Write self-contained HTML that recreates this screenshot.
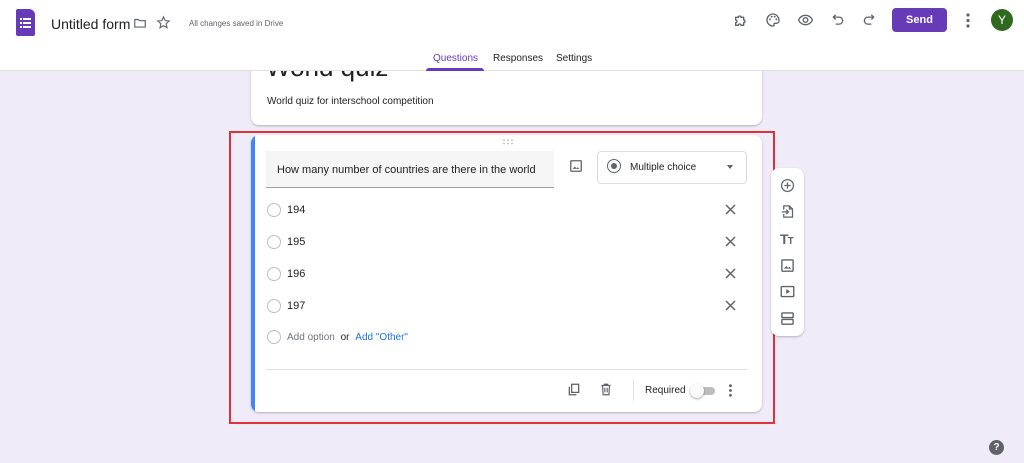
<!DOCTYPE html>
<html><head><meta charset="utf-8"><style>
*{box-sizing:border-box;margin:0;padding:0}
body{width:1024px;height:463px;overflow:hidden;background:#f0ebf8;font-family:"Liberation Sans",Arial,sans-serif;position:relative;color:#202124}
.abs{position:absolute}
#hdr{left:0;top:0;width:1024px;height:71px;background:#fff;border-bottom:1px solid #e0e0e0;z-index:5}
.card{background:#fff;border-radius:8px;box-shadow:0 1px 2px rgba(0,0,0,.25)}
.radio{width:14px;height:14px;border:1.5px solid #bdbdbd;border-radius:50%}
.opt{font-size:11px;color:#202124}
svg{display:block}
</style></head><body>
<div id="hdr" class="abs">
  <div class="abs" style="left:16px;top:9px;width:19px;height:27px;background:#673ab7;border-radius:2px 6px 2px 2px"></div>
  <svg class="abs" style="left:19px;top:17px" width="13" height="12" viewBox="0 0 13 12"><g fill="#fff"><rect x="1" y="1" width="2" height="2"/><rect x="4" y="1" width="8" height="2"/><rect x="1" y="5" width="2" height="2"/><rect x="4" y="5" width="8" height="2"/><rect x="1" y="9" width="2" height="2"/><rect x="4" y="9" width="8" height="2"/></g></svg>
  <div class="abs" style="left:51px;top:16px;font-size:14px;color:#202124">Untitled form</div>
  <svg class="abs" style="left:133px;top:16px" width="14" height="14" viewBox="0 0 24 24"><path d="M3 6h6l2 2h10v11H3z" fill="none" stroke="#5f6368" stroke-width="2"/></svg>
  <svg class="abs" style="left:156px;top:15px" width="15" height="15" viewBox="0 0 24 24"><path d="M12 3l2.7 6 6.3.6-4.8 4.3 1.4 6.4L12 17l-5.6 3.3 1.4-6.4L3 9.6 9.3 9z" fill="none" stroke="#5f6368" stroke-width="1.8"/></svg>
  <div class="abs" style="left:189px;top:19px;font-size:8px;color:#5f6368">All changes saved in Drive</div>
  <svg class="abs" style="left:733px;top:12px" width="16" height="16" viewBox="0 0 24 24"><path d="M4 8h4a2 2 0 1 1 4 0h4v4a2 2 0 1 1 0 4v4h-4a2 2 0 1 0-4 0H4v-4a2 2 0 1 0 0-4z" fill="none" stroke="#5f6368" stroke-width="2"/></svg>
  <svg class="abs" style="left:765px;top:12px" width="16" height="16" viewBox="0 0 24 24"><path d="M12 3a9 9 0 0 0 0 18c1.5 0 2-1 1.5-2s0-2 1.5-2H17a4 4 0 0 0 4-4c0-5.5-4-10-9-10z" fill="none" stroke="#5f6368" stroke-width="2"/><circle cx="7.5" cy="11" r="1.4" fill="#5f6368"/><circle cx="10" cy="7" r="1.4" fill="#5f6368"/><circle cx="14.5" cy="7" r="1.4" fill="#5f6368"/><circle cx="17" cy="11" r="1.4" fill="#5f6368"/></svg>
  <svg class="abs" style="left:797px;top:12px" width="17" height="16" viewBox="0 0 24 24"><path d="M1.5 12C4 7 8 5 12 5s8 2 10.5 7c-2.5 5-6.5 7-10.5 7s-8-2-10.5-7z" fill="none" stroke="#5f6368" stroke-width="2"/><circle cx="12" cy="12" r="3.5" fill="none" stroke="#5f6368" stroke-width="2"/></svg>
  <svg class="abs" style="left:831px;top:12px" width="14" height="15" viewBox="0 0 24 24"><path d="M8 4L4 8l4 4M4 8h10a6 6 0 0 1 0 12H8" fill="none" stroke="#5f6368" stroke-width="2.2"/></svg>
  <svg class="abs" style="left:862px;top:12px" width="14" height="15" viewBox="0 0 24 24"><path d="M16 4l4 4-4 4M20 8H10a6 6 0 0 0 0 12h6" fill="none" stroke="#5f6368" stroke-width="2.2"/></svg>
  <div class="abs" style="left:892px;top:8px;width:55px;height:24px;background:#673ab7;border-radius:4px;color:#fff;font-size:11px;font-weight:bold;text-align:center;line-height:24px">Send</div>
  <svg class="abs" style="left:965px;top:13px" width="6" height="15" viewBox="0 0 6 15"><circle cx="3" cy="2" r="1.6" fill="#5f6368"/><circle cx="3" cy="7.5" r="1.6" fill="#5f6368"/><circle cx="3" cy="13" r="1.6" fill="#5f6368"/></svg>
  <div class="abs" style="left:991px;top:9px;width:22px;height:22px;border-radius:50%;background:#2e6a1e;color:#fff;font-size:12px;text-align:center;line-height:22px">Y</div>
  <div class="abs" style="left:433px;top:53px;font-size:10px;color:#673ab7">Questions</div>
  <div class="abs" style="left:426px;top:68px;width:58px;height:3px;background:#673ab7;border-radius:3px 3px 0 0"></div>
  <div class="abs" style="left:493px;top:53px;font-size:10px;color:#202124">Responses</div>
  <div class="abs" style="left:556px;top:53px;font-size:10px;color:#202124">Settings</div>
</div>

<div class="abs card" style="left:251px;top:40px;width:511px;height:85px"></div>
<div class="abs" style="left:266px;top:52px;font-size:26px;color:#202124">World quiz</div>
<div class="abs" style="left:267px;top:96px;font-size:10px;color:#202124">World quiz for interschool competition</div>

<div class="abs" style="left:229px;top:131px;width:546px;height:293px;border:2.5px solid #e0313b"></div>
<div class="abs card" style="left:251px;top:135px;width:511px;height:277px;overflow:hidden">
  <div class="abs" style="left:0;top:0;width:4px;height:277px;background:#4285f4"></div>
</div>
<svg class="abs" style="left:502px;top:139px" width="12" height="6"><g fill="#bdbdbd"><circle cx="2" cy="1.2" r=".9"/><circle cx="6" cy="1.2" r=".9"/><circle cx="10" cy="1.2" r=".9"/><circle cx="2" cy="4.5" r=".9"/><circle cx="6" cy="4.5" r=".9"/><circle cx="10" cy="4.5" r=".9"/></g></svg>
<div class="abs" style="left:266px;top:151px;width:288px;height:37px;background:#f5f5f5;border-bottom:1px solid #9e9e9e"></div>
<div class="abs" style="left:277px;top:164px;font-size:11px">How many number of countries are there in the world</div>
<svg class="abs" style="left:569px;top:159px" width="14" height="14" viewBox="0 0 24 24"><rect x="3" y="3" width="18" height="18" rx="1" fill="none" stroke="#5f6368" stroke-width="2.2"/><path d="M6 17l4-4 3 3 2-2 3 3z" fill="#5f6368"/></svg>
<div class="abs" style="left:597px;top:151px;width:150px;height:33px;border:1px solid #dadce0;border-radius:4px"></div>
<div class="abs" style="left:607px;top:159px;width:14px;height:14px;border:1.8px solid #5f6368;border-radius:50%"></div>
<div class="abs" style="left:611px;top:163px;width:6px;height:6px;background:#5f6368;border-radius:50%"></div>
<div class="abs" style="left:630px;top:162px;font-size:10px">Multiple choice</div>
<div class="abs" style="left:727px;top:165px;border:3.5px solid transparent;border-top:4px solid #5f6368"></div>

<div class="abs radio" style="left:267px;top:203px"></div><div class="abs opt" style="left:287px;top:204px">194</div>
<div class="abs radio" style="left:267px;top:235px"></div><div class="abs opt" style="left:287px;top:236px">195</div>
<div class="abs radio" style="left:267px;top:267px"></div><div class="abs opt" style="left:287px;top:268px">196</div>
<div class="abs radio" style="left:267px;top:299px"></div><div class="abs opt" style="left:287px;top:300px">197</div>
<div class="abs radio" style="left:267px;top:330px"></div>
<div class="abs" style="left:287px;top:332px;font-size:10px;color:#70757a">Add option <span style="color:#202124;margin-left:3px">or</span> <span style="color:#1a73e8;margin-left:3px">Add "Other"</span></div>
<svg class="abs" style="left:725px;top:204px" width="11" height="11" viewBox="0 0 11 11"><path d="M1 1l9 9M10 1l-9 9" stroke="#5f6368" stroke-width="1.5"/></svg>
<svg class="abs" style="left:725px;top:236px" width="11" height="11" viewBox="0 0 11 11"><path d="M1 1l9 9M10 1l-9 9" stroke="#5f6368" stroke-width="1.5"/></svg>
<svg class="abs" style="left:725px;top:268px" width="11" height="11" viewBox="0 0 11 11"><path d="M1 1l9 9M10 1l-9 9" stroke="#5f6368" stroke-width="1.5"/></svg>
<svg class="abs" style="left:725px;top:300px" width="11" height="11" viewBox="0 0 11 11"><path d="M1 1l9 9M10 1l-9 9" stroke="#5f6368" stroke-width="1.5"/></svg>
<div class="abs" style="left:266px;top:369px;width:481px;height:1px;background:#e0e0e0"></div>

<svg class="abs" style="left:567px;top:382px" width="14" height="15" viewBox="0 0 24 24"><path d="M4 7v14h12" fill="none" stroke="#5f6368" stroke-width="2.2"/><rect x="8" y="3" width="12" height="14" fill="none" stroke="#5f6368" stroke-width="2.2"/></svg>
<svg class="abs" style="left:599px;top:382px" width="14" height="15" viewBox="0 0 24 24"><path d="M4 5h16M9 5V3h6v2M6 5l1 16h10l1-16M10 9v8M14 9v8" fill="none" stroke="#5f6368" stroke-width="2"/></svg>
<div class="abs" style="left:633px;top:380px;width:1px;height:21px;background:#e0e0e0"></div>
<div class="abs" style="left:645px;top:385px;font-size:10px">Required</div>
<div class="abs" style="left:693px;top:387px;width:22px;height:8px;border-radius:4px;background:#bdbdbd"></div>
<div class="abs" style="left:690px;top:384px;width:14px;height:14px;border-radius:50%;background:#fafafa;box-shadow:0 1px 2px rgba(0,0,0,.35)"></div>
<svg class="abs" style="left:728px;top:384px" width="5" height="13" viewBox="0 0 5 13"><circle cx="2.5" cy="1.7" r="1.4" fill="#5f6368"/><circle cx="2.5" cy="6.5" r="1.4" fill="#5f6368"/><circle cx="2.5" cy="11.3" r="1.4" fill="#5f6368"/></svg>

<div class="abs card" style="left:771px;top:168px;width:33px;height:168px"></div>
<svg class="abs" style="left:780px;top:178px" width="15" height="15" viewBox="0 0 24 24"><circle cx="12" cy="12" r="9.5" fill="none" stroke="#5f6368" stroke-width="2"/><path d="M12 7v10M7 12h10" stroke="#5f6368" stroke-width="2"/></svg>
<svg class="abs" style="left:780px;top:204px" width="15" height="15" viewBox="0 0 24 24"><path d="M6 9V3h9l5 5v13H6v-5M15 3v5h5M3 12.5h10M10 9l3.5 3.5L10 16" fill="none" stroke="#5f6368" stroke-width="2"/></svg>
<div class="abs" style="left:780px;top:231px;font-size:14px;font-weight:bold;color:#5f6368;letter-spacing:-1px">T<span style="font-size:10px">T</span></div>
<svg class="abs" style="left:780px;top:258px" width="15" height="15" viewBox="0 0 24 24"><rect x="3" y="3" width="18" height="18" rx="1" fill="none" stroke="#5f6368" stroke-width="2.2"/><path d="M6 17l4-4 3 3 2-2 3 3z" fill="#5f6368"/></svg>
<svg class="abs" style="left:780px;top:284px" width="15" height="15" viewBox="0 0 24 24"><rect x="2" y="4" width="20" height="16" rx="1" fill="none" stroke="#5f6368" stroke-width="2.2"/><path d="M10 8v8l6-4z" fill="#5f6368"/></svg>
<svg class="abs" style="left:780px;top:311px" width="15" height="15" viewBox="0 0 24 24"><rect x="3" y="3" width="18" height="7.5" rx="1" fill="none" stroke="#5f6368" stroke-width="2.2"/><rect x="3" y="13.5" width="18" height="7.5" rx="1" fill="none" stroke="#5f6368" stroke-width="2.2"/></svg>

<div class="abs" style="left:989px;top:440px;width:15px;height:15px;border-radius:50%;background:#5f6368;color:#fff;font-size:10px;font-weight:bold;text-align:center;line-height:15px">?</div>
</body></html>
